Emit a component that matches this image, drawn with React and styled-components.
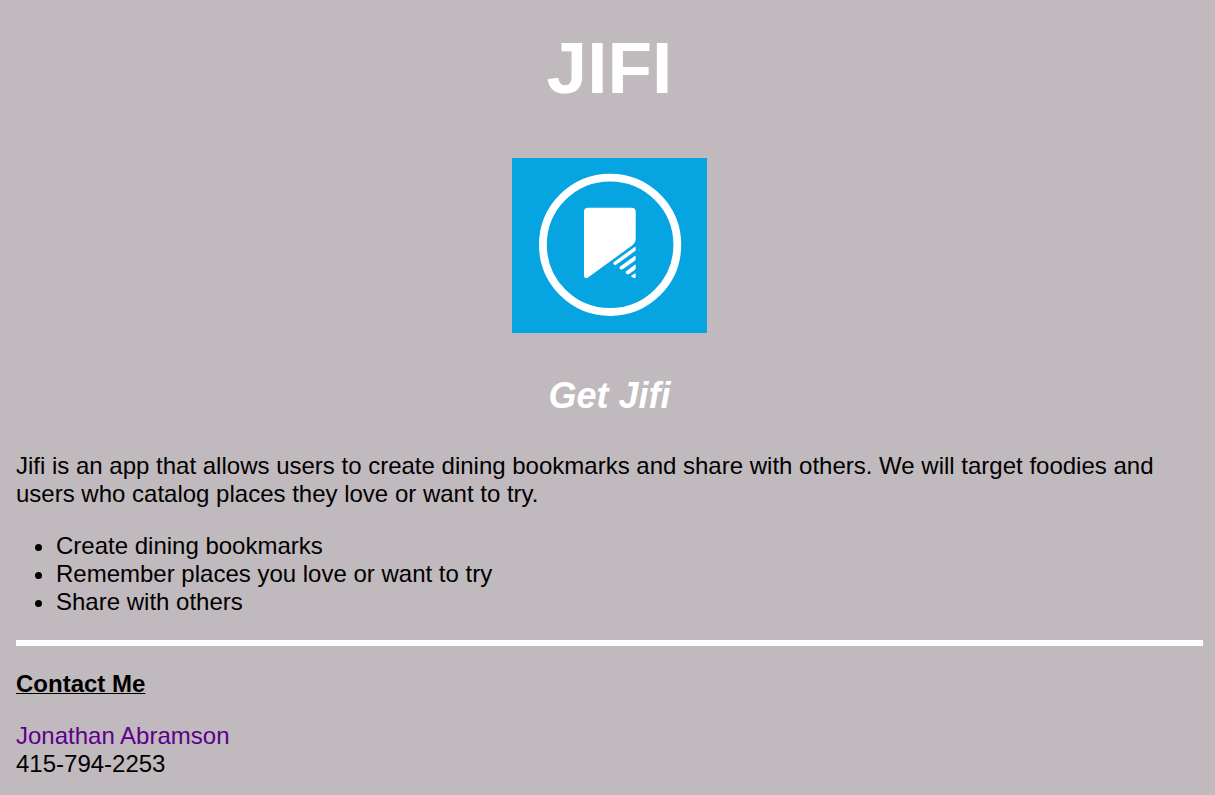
import React from "react";
import styled, { createGlobalStyle } from "styled-components";

const GlobalStyle = createGlobalStyle`
  body {
    margin: 0;
    background: #c0b9bd;
    color: #000;
    font-family: "Liberation Sans", Arial, Helvetica, sans-serif;
    font-size: 24px;
    line-height: 28px;
  }
`;

const Page = styled.main`
  padding: 26px 12px 16px 16px;
`;

const Title = styled.h1`
  margin: 0 0 48px;
  color: #fff;
  font-size: 73px;
  line-height: 84px;
  text-align: center;
`;

const Logo = styled.svg`
  display: block;
  width: 195px;
  height: 175px;
  margin: 0 auto;
`;

const Tagline = styled.h2`
  margin: 40px 0 33px;
  color: #fff;
  font-size: 36px;
  font-style: italic;
  line-height: 46px;
  text-align: center;
`;

const Intro = styled.p`
  margin: 0 0 24px;
`;

const Features = styled.ul`
  margin: 0 0 24px;
  padding-left: 40px;
`;

const Divider = styled.hr`
  height: 6px;
  margin: 0 0 24px;
  border: 0;
  background: #fff;
`;

const ContactHeading = styled.h3`
  margin: 0 0 24px;
  font-size: 24px;
  text-decoration: underline;
  text-decoration-thickness: 1px;
`;

const Contact = styled.address`
  font-style: normal;
`;

const ContactLink = styled.a`
  display: block;
  width: fit-content;
  color: #5c008c;
  text-decoration: none;
`;

export default function App() {
  return (
    <>
      <GlobalStyle />
      <Page>
        <Title>JIFI</Title>
        <Logo viewBox="0 0 195 175" role="img" aria-label="Jifi logo">
          <rect width="195" height="175" fill="#06a5e2" />
          <circle cx="98.1" cy="86.8" r="67.2" fill="none" stroke="#fff" strokeWidth="7.8" />
          <g fill="#fff">
            <path d="M76 49.8H119.7Q123.7 49.8 123.7 53.8V80.5Q123.7 85 119.7 87.8L76 119.4Q74.8 120.2 73.6 120Q72 119.8 72 118V53.8Q72 49.8 76 49.8Z" />
            <path d="M122.4 89.3Q123.7 88.4 123.7 89.8V91.4Q123.7 92.6 122.4 93.6L104.4 106.6Q103 107.5 101.8 106.4Q100.6 105 102 103.9Z" />
            <path d="M122.4 98.2Q123.7 97.3 123.7 98.7V100.6Q123.7 102 122.4 103L111 111.1Q109.4 112.1 108 111Q106.8 109.7 108.2 108.6Z" />
            <path d="M122.4 107Q123.7 106 123.7 107.5V109.8Q123.7 111.2 122.4 112.2L117 115.9Q115.6 116.8 114.3 115.8Q113 114.5 114.3 113.3Z" />
            <path d="M122.4 115.7Q123.7 114.7 123.7 116.2V118.8Q123.7 120.6 122 119.9L119.6 118.8Q118.8 118.2 119.6 117.6Z" />
          </g>
        </Logo>
        <Tagline>Get Jifi</Tagline>
        <Intro>
          Jifi is an app that allows users to create dining bookmarks and share
          with others. We will target foodies and users who catalog places they
          love or want to try.
        </Intro>
        <Features>
          <li>Create dining bookmarks</li>
          <li>Remember places you love or want to try</li>
          <li>Share with others</li>
        </Features>
        <Divider />
        <ContactHeading>Contact Me</ContactHeading>
        <Contact>
          <ContactLink href="mailto:jonathan@jifi.app">Jonathan Abramson</ContactLink>
          415-794-2253
        </Contact>
      </Page>
    </>
  );
}
